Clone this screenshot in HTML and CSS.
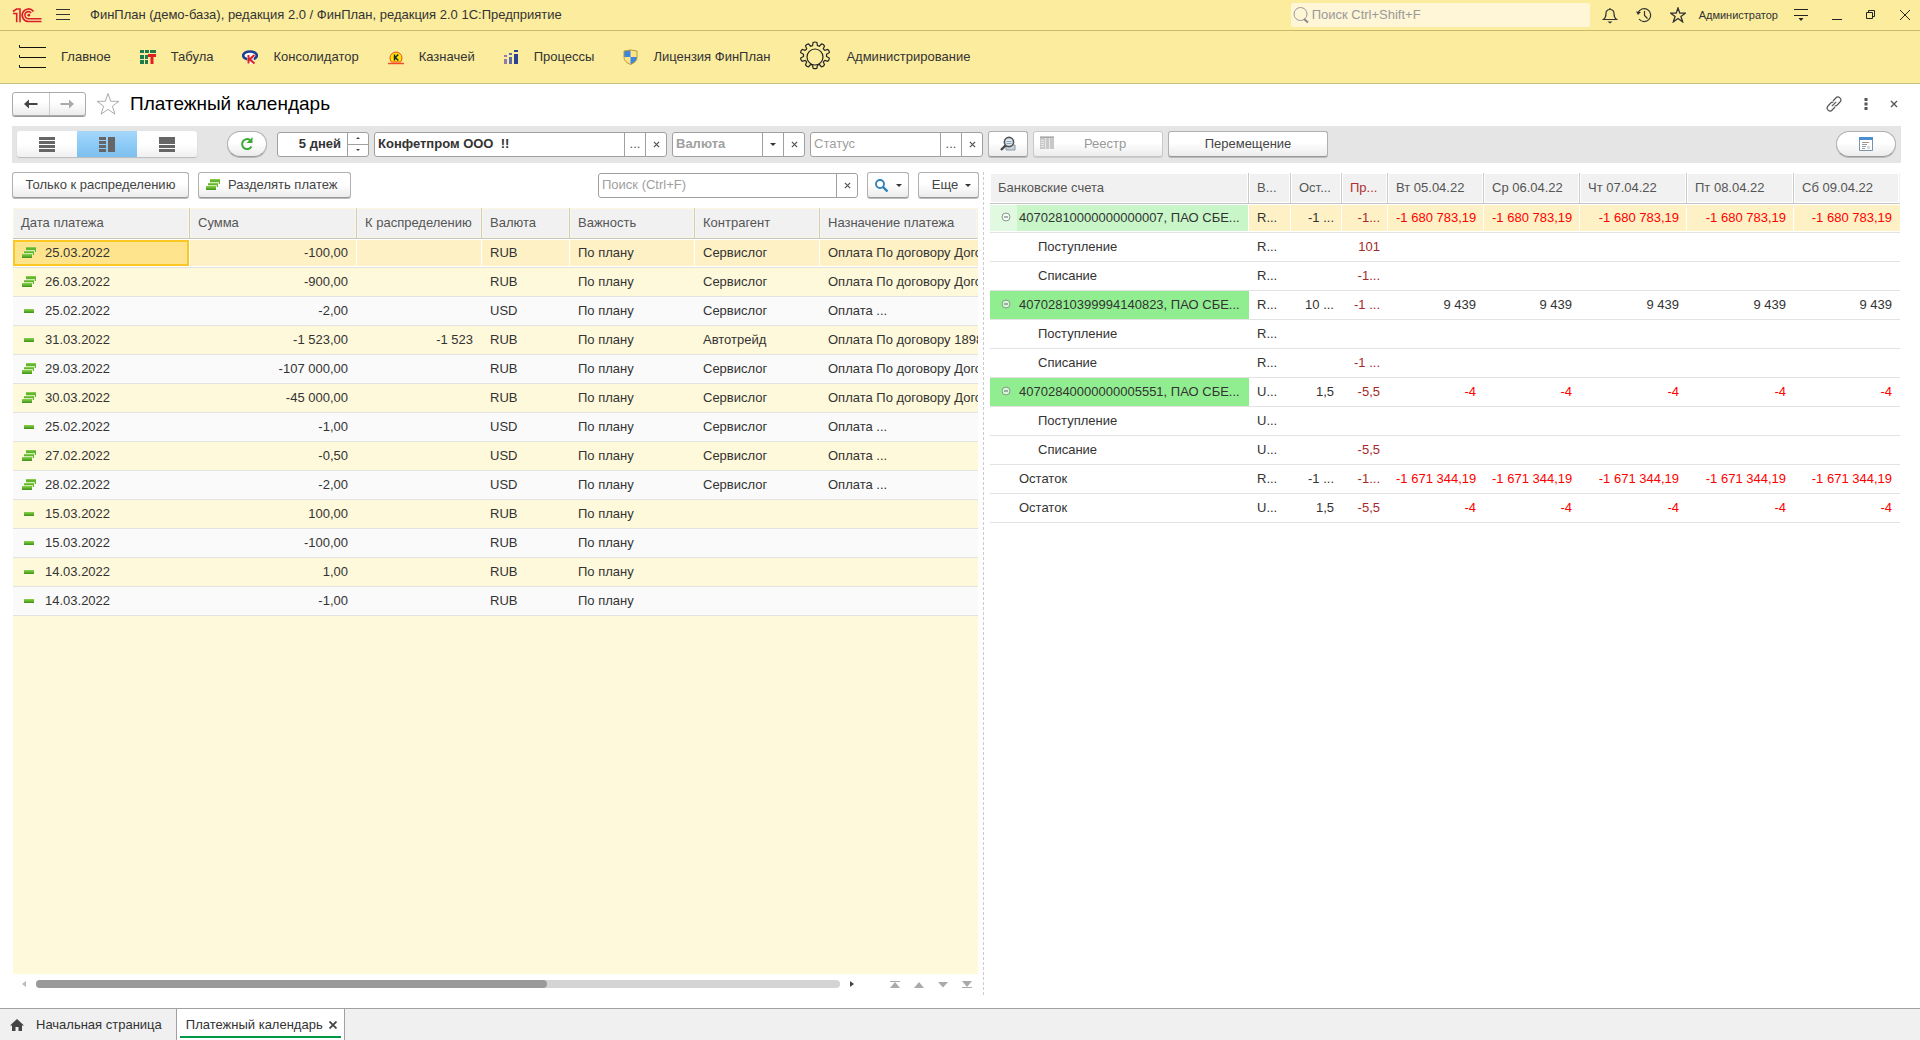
FILE: index.html
```html
<!DOCTYPE html>
<html lang="ru">
<head>
<meta charset="utf-8">
<title>Платежный календарь</title>
<link rel="stylesheet" href="styles.css">
</head>
<body>
<svg class="defs" aria-hidden="true">
  <defs>
    <linearGradient id="green" x1="0" y1="0" x2="0" y2="1"><stop offset="0" stop-color="#8fd04f"/><stop offset=".5" stop-color="#62b52e"/><stop offset="1" stop-color="#3f8f1c"/></linearGradient>
  </defs>
  <symbol id="many" viewBox="0 0 15 12"><path d="M4 0h10v5h-2v3h-2v3H0V7h2V4h2z" fill="#cfeab5"/><path d="M4 0h10v5h-1V3H4zM2 4h10v4h-1V6H2z" fill="#62b52e"/><path d="M4 0h10v1H4zM2 4h10v1H2z" fill="#86ca4a"/><path d="M0 7h10v4H0z" fill="url(#green)"/></symbol>
  <symbol id="one" viewBox="0 0 15 12"><path d="M2 4h10v4H2z" fill="url(#green)"/></symbol>
  <symbol id="minus" viewBox="0 0 10 10"><circle cx="5" cy="5" r="4" fill="#fff" fill-opacity=".6" stroke="#8a9a8a"/><path d="M3 5h4" stroke="#667" /></symbol>
  <symbol id="cross" viewBox="0 0 8 8"><path d="M1 1l6 6M7 1L1 7" fill="none" stroke="currentColor" stroke-width="1.4"/></symbol>
  <symbol id="star" viewBox="0 0 24 24"><path d="M12 1.500l2.700 7.800h8.300l-6.600 4.900 2.500 8-6.900-4.900-6.900 4.900 2.500-8L1 9.300h8.300z" fill="none" stroke="currentColor"/></symbol>
</svg>

<header class="titlebar">
  <svg class="logo" viewBox="0 0 30 16"><g fill="none" stroke="#d9202a" stroke-width="1.600"><path d="M1 4.500L4.500 2H8v13.200M1 6.500h3.700v8.700"/><path d="M21.500 4.400A6.300 6.300 0 1 0 16.500 14.500H29.500"/><path d="M19.200 5.900A3.600 3.600 0 1 0 16.500 11.800H29.500"/></g><circle cx="16.800" cy="8.200" r="1.400" fill="#d9202a"/></svg>
  <button class="plain menu-btn" aria-label="Меню"><svg width="14" height="12" viewBox="0 0 14 12"><path d="M0 .500h14M0 5.500h14M0 10.500h14" stroke="#333"/></svg></button>
  <span class="app-name">ФинПлан (демо-база), редакция 2.0 / ФинПлан, редакция 2.0 1С:Предприятие</span>
  <label class="global-search">
    <svg width="16" height="18" viewBox="0 0 16 18"><circle cx="7.500" cy="8" r="6.500" fill="none" stroke="#999"/><path d="M11 13l4 3.500" stroke="#888" stroke-width="2"/></svg>
    <input type="text" placeholder="Поиск Ctrl+Shift+F" aria-label="Поиск">
  </label>
  <div class="tools">
    <button class="plain" aria-label="Уведомления"><svg width="16" height="18" viewBox="0 0 16 18"><path d="M1.500 13.500h13c-2-1.500-2.500-3-2.500-6C12 5 10.500 3.500 8 3.500S4 5 4 7.500c0 3-.5 4.500-2.500 6zM8 3.500V2" fill="none" stroke="#333" stroke-width="1.200"/><path d="M5.500 15.500h5L8 17.500z" fill="#333"/></svg></button>
    <button class="plain" aria-label="История"><svg width="16" height="18" viewBox="0 0 16 18"><path d="M2 7A6.500 6.500 0 1 1 3 13M8.500 5v4.500l3 3" fill="none" stroke="#333" stroke-width="1.200"/><path d="M0 5.500l5 .5-3 3z" fill="#333"/></svg></button>
    <button class="plain" aria-label="Избранное"><svg class="dark" width="16" height="16"><use href="#star" stroke-width="2"/></svg></button>
  </div>
  <a class="user" href="#">Администратор</a>
  <div class="window-tools">
    <button class="plain" aria-label="Настройки"><svg width="14" height="12" viewBox="0 0 14 12"><path d="M0 .500h14M0 6.500h14" stroke="#222"/><path d="M4.500 9h5L7 12z" fill="#222"/></svg></button>
    <button class="plain" aria-label="Свернуть"><svg width="10" height="10" viewBox="0 0 10 10"><path d="M0 9.500h10" stroke="#222"/></svg></button>
    <button class="plain" aria-label="Восстановить"><svg width="10" height="10" viewBox="0 0 10 10"><path d="M.5 2.500h6v6h-6zM2.500 2.500v-2h6v6h-2" fill="none" stroke="#222"/></svg></button>
    <button class="plain" aria-label="Закрыть"><svg width="10" height="10" viewBox="0 0 10 10"><path d="M0 0l10 10M10 0L0 10" stroke="#222"/></svg></button>
  </div>
</header>

<nav class="sections">
  <a href="#"><svg width="28" height="24" viewBox="0 0 28 24"><path d="M1.500 0v2.500H28M1.500 10v2.500H28M1.500 20v2.500H28" fill="none" stroke="#111" stroke-width="1"/></svg><span>Главное</span></a>
  <a href="#"><svg width="16" height="16" viewBox="0 0 16 16"><path d="M0 1h4v3H0zM5 1h4v3H5zM0 6h4v4H0zM0 11h4v4H0zM5 6h3v4H5zM5 11h3v4H5zM10 1h6v3h-6z" fill="#1f7a4d"/><path d="M8 5h8v3h-2.500v7h-3V8H8z" fill="#e02020"/></svg><span>Табула</span></a>
  <a href="#"><svg width="16" height="16" viewBox="0 0 16 16"><ellipse cx="8" cy="6.500" rx="6.800" ry="4" fill="#fff" stroke="#1c3f94" stroke-width="2.600"/><path d="M5 6h7v9H5z" fill="#fff" fill-opacity=".7"/><path d="M6.500 6v8.500M12.500 6L7.500 10.300l5 4.200" fill="none" stroke="#e02020" stroke-width="2"/></svg><span>Консолидатор</span></a>
  <a href="#"><svg width="16" height="16" viewBox="0 0 16 16"><path d="M3.500 13a6 6 0 1 1 9 0z" fill="#ffe800" stroke="#f04a23"/><path d="M0 14.500h16" stroke="#f04a23" stroke-width="1.400"/><path d="M6.500 5.500v6M10.300 5.500L7.300 8.500l3 3" fill="none" stroke="#222" stroke-width="1.500"/></svg><span>Казначей</span></a>
  <a href="#"><svg width="15" height="16" viewBox="0 0 15 16"><path d="M0 10h3v5H0zM0 6h3v2H0z" fill="#8e7bb0"/><path d="M5 8h3v7H5zM5 4h3v2H5z" fill="#5c6aa8"/><path d="M10 5h4v10h-4zM10 1h4v2h-4z" fill="#2b3f94"/></svg><span>Процессы</span></a>
  <a href="#"><svg width="15" height="16" viewBox="0 0 15 16"><path d="M7.500 1l6.500 1v6c0 4-3 6-6.500 7.500C4 14 1 12 1 8V2z" fill="#ffe38a"/><path d="M7.500 1v7H1V2zM7.500 8H14c0 4-3 6-6.500 7.500z" fill="#3d85dd"/><path d="M7.500 1l6.500 1v6c0 4-3 6-6.500 7.500C4 14 1 12 1 8V2z" fill="none" stroke="#b99a35"/></svg><span>Лицензия ФинПлан</span></a>
  <a href="#"><svg width="32" height="32" viewBox="-16 -16 32 32"><g fill="none" stroke="#222" stroke-width="1.200"><circle r="8"/><path d="M-1.900-14.500q1.900-1 3.800 0l.5 3.100 2 .6 2.100-2.400q2.100.2 3 2.100l-1.200 2.900 1.500 1.500 3-.9q1.700 1.300 1.500 3.300l-2.800 1.600v2.100l2.800 1.600q.1 2-1.500 3.300l-3-.9-1.500 1.500 1.200 2.900q-1 1.900-3 2.100l-2.100-2.400-2 .6-.5 3.100q-1.900 1-3.800 0l-.5-3.100-2-.6-2.100 2.400q-2.100-.2-3-2.100l1.200-2.900-1.500-1.500-3 .9q-1.700-1.300-1.500-3.300l2.800-1.600v-2.100l-2.800-1.600q-.1-2 1.500-3.300l3 .9 1.500-1.500-1.200-2.900q1-1.900 3-2.100l2.100 2.400 2-.6z"/></g></svg><span>Администрирование</span></a>
</nav>

<main class="form">
  <div class="form-head">
    <div class="history">
      <button aria-label="Назад"><svg width="14" height="10" viewBox="0 0 14 10"><path d="M13.500 5H3" stroke="#444" stroke-width="2"/><path d="M0 5l5-4.500v9z" fill="#444"/></svg></button>
      <button aria-label="Вперед"><svg width="14" height="10" viewBox="0 0 14 10"><path d="M.5 5h10" stroke="#aaa" stroke-width="2"/><path d="M14 5L9 .500v9z" fill="#aaa"/></svg></button>
    </div>
    <button class="plain fav" aria-label="В избранное"><svg width="24" height="24"><use href="#star"/></svg></button>
    <h1>Платежный календарь</h1>
    <div class="form-tools">
      <button class="plain" aria-label="Ссылка"><svg width="16" height="16" viewBox="0 0 16 16"><g fill="none" stroke="#555" stroke-width="1.200"><path d="M7 5l2.800-3A2.900 2.900 0 0 1 14 6L11 9.200q-1 .8-2.300.5M9 11L6.200 14A2.900 2.900 0 0 1 2 10L5 6.800q1-.8 2.300-.5M5.800 10.200l4.400-4.400"/></g></svg></button>
      <button class="plain" aria-label="Еще действия"><svg width="4" height="12" viewBox="0 0 4 12"><path d="M.5 0h3v3h-3zM.5 4.500h3v3h-3zM.5 9h3v3h-3z" fill="#555"/></svg></button>
      <button class="plain" aria-label="Закрыть форму"><svg width="8" height="8"><use href="#cross"/></svg></button>
    </div>
  </div>

  <div class="toolbar">
    <div class="modes">
      <button aria-label="Список"><svg width="16" height="15" viewBox="0 0 16 15"><path d="M0 0h16v3H0zM0 4h16v3H0zM0 8h16v3H0zM0 12h16v3H0z" fill="#666"/></svg></button>
      <button class="on" aria-label="Список и календарь"><svg width="16" height="15" viewBox="0 0 16 15"><path d="M0 0h7v3H0zM0 4h7v3H0zM0 8h7v3H0zM0 12h7v3H0zM9 0h7v15H9z" fill="#666"/></svg></button>
      <button aria-label="Календарь"><svg width="16" height="15" viewBox="0 0 16 15"><path d="M0 0h16v7H0zM0 8h16v3H0zM0 12h16v3H0z" fill="#666"/></svg></button>
    </div>
    <button class="btn pill refresh" aria-label="Обновить"><svg width="14" height="14" viewBox="0 0 14 14"><path d="M11.500 9.500A5 5 0 1 1 10 3" fill="none" stroke="#3aaa35" stroke-width="2"/><path d="M12.500 0v6h-6z" fill="#3aaa35"/></svg></button>
    <div class="field days">
      <input class="strong" type="text" value="5 дней" aria-label="Период">
      <div class="spin"><button aria-label="Больше"><i class="up"></i></button><button aria-label="Меньше"><i class="down"></i></button></div>
    </div>
    <div class="field org">
      <input class="strong" type="text" value="Конфетпром ООО  !!" aria-label="Организация">
      <button>...</button><button aria-label="Очистить организацию"><svg width="7" height="7"><use href="#cross"/></svg></button>
    </div>
    <div class="field currency">
      <input class="strong" type="text" placeholder="Валюта" aria-label="Валюта">
      <button aria-label="Выбрать валюту"><i class="caret"></i></button><button aria-label="Очистить валюту"><svg width="7" height="7"><use href="#cross"/></svg></button>
    </div>
    <div class="field status">
      <input type="text" placeholder="Статус" aria-label="Статус">
      <button>...</button><button aria-label="Очистить статус"><svg width="7" height="7"><use href="#cross"/></svg></button>
    </div>
    <button class="btn find" aria-label="Найти документ"><svg width="16" height="16" viewBox="0 0 16 16"><path d="M6 9h9v5H6z" fill="#c9d3dc" stroke="#8a949c"/><circle cx="9" cy="6" r="4.600" fill="#dfe9f2" stroke="#555" stroke-width="1.600"/><path d="M6.500 5.500h5M6.500 7.500h5" stroke="#8fa3b5"/><path d="M5.500 9.500L1 14" stroke="#444" stroke-width="2.400"/></svg></button>
    <button class="btn registry" disabled><svg width="14" height="13" viewBox="0 0 14 13"><path d="M0 0h14v13H0z" fill="#c8c8c8"/><path d="M0 1.500h14" stroke="#aaa"/><path d="M1 4.500h3M1 6.500h3M1 8.500h3M1 10.500h3M5.500 2v11M9.500 2v11" stroke="#e8e8e8"/></svg><span>Реестр</span></button>
    <button class="btn transfer">Перемещение</button>
    <button class="btn pill settings" aria-label="Настройка формы"><svg width="14" height="14" viewBox="0 0 14 14"><path d="M.5.500h13v13H.5z" fill="#fff" stroke="#7b93a8"/><path d="M0 0h14v3H0z" fill="#4a90d0"/><path d="M3 5.500h7M3 7.500h5M3 9.500h4M3 11.500h3" stroke="#999"/><path d="M8 9h3v3H8z" fill="#d5dbe0"/></svg></button>
  </div>

  <div class="panes">
    <section class="payments">
      <div class="commands">
        <button class="btn only">Только к распределению</button>
        <button class="btn split"><svg width="15" height="12"><use href="#many"/></svg>Разделять платеж</button>
        <div class="field search">
          <input type="text" placeholder="Поиск (Ctrl+F)" aria-label="Поиск в списке">
          <button aria-label="Очистить поиск"><svg width="7" height="7"><use href="#cross"/></svg></button>
        </div>
        <button class="btn lens" aria-label="Найти"><svg width="13" height="13" viewBox="0 0 13 13"><circle cx="5" cy="5" r="4" fill="none" stroke="#2f7fb8" stroke-width="1.800"/><path d="M8 8l4.500 4.500" stroke="#2f7fb8" stroke-width="2.400"/></svg><i class="caret"></i></button>
        <button class="btn more">Еще<i class="caret"></i></button>
      </div>
      <div class="list">
        <table class="grid">
          <colgroup><col class="c-date"><col class="c-sum"><col class="c-mid"><col class="c-cur"><col class="c-mid"><col class="c-mid"><col></colgroup>
          <thead><tr><th>Дата платежа</th><th>Сумма</th><th>К распределению</th><th>Валюта</th><th>Важность</th><th>Контрагент</th><th>Назначение платежа</th></tr></thead>
          <tbody>
            <tr class="selected"><td class="current"><svg class="mark"><use href="#many"/></svg>25.03.2022</td><td class="num">-100,00</td><td></td><td>RUB</td><td>По плану</td><td>Сервислог</td><td>Оплата По договору Договор</td></tr>
            <tr><td><svg class="mark"><use href="#many"/></svg>26.03.2022</td><td class="num">-900,00</td><td></td><td>RUB</td><td>По плану</td><td>Сервислог</td><td>Оплата По договору Договор</td></tr>
            <tr><td><svg class="mark"><use href="#one"/></svg>25.02.2022</td><td class="num">-2,00</td><td></td><td>USD</td><td>По плану</td><td>Сервислог</td><td>Оплата ...</td></tr>
            <tr><td><svg class="mark"><use href="#one"/></svg>31.03.2022</td><td class="num">-1 523,00</td><td class="num">-1 523</td><td>RUB</td><td>По плану</td><td>Автотрейд</td><td>Оплата По договору 1898</td></tr>
            <tr><td><svg class="mark"><use href="#many"/></svg>29.03.2022</td><td class="num">-107 000,00</td><td></td><td>RUB</td><td>По плану</td><td>Сервислог</td><td>Оплата По договору Договор</td></tr>
            <tr><td><svg class="mark"><use href="#many"/></svg>30.03.2022</td><td class="num">-45 000,00</td><td></td><td>RUB</td><td>По плану</td><td>Сервислог</td><td>Оплата По договору Договор</td></tr>
            <tr><td><svg class="mark"><use href="#one"/></svg>25.02.2022</td><td class="num">-1,00</td><td></td><td>USD</td><td>По плану</td><td>Сервислог</td><td>Оплата ...</td></tr>
            <tr><td><svg class="mark"><use href="#many"/></svg>27.02.2022</td><td class="num">-0,50</td><td></td><td>USD</td><td>По плану</td><td>Сервислог</td><td>Оплата ...</td></tr>
            <tr><td><svg class="mark"><use href="#many"/></svg>28.02.2022</td><td class="num">-2,00</td><td></td><td>USD</td><td>По плану</td><td>Сервислог</td><td>Оплата ...</td></tr>
            <tr><td><svg class="mark"><use href="#one"/></svg>15.03.2022</td><td class="num">100,00</td><td></td><td>RUB</td><td>По плану</td><td></td><td></td></tr>
            <tr><td><svg class="mark"><use href="#one"/></svg>15.03.2022</td><td class="num">-100,00</td><td></td><td>RUB</td><td>По плану</td><td></td><td></td></tr>
            <tr><td><svg class="mark"><use href="#one"/></svg>14.03.2022</td><td class="num">1,00</td><td></td><td>RUB</td><td>По плану</td><td></td><td></td></tr>
            <tr><td><svg class="mark"><use href="#one"/></svg>14.03.2022</td><td class="num">-1,00</td><td></td><td>RUB</td><td>По плану</td><td></td><td></td></tr>
          </tbody>
        </table>
      </div>
      <div class="scroller">
        <button class="plain" aria-label="Влево"><svg width="4" height="6" viewBox="0 0 4 6"><path d="M4 0v6L0 3z" fill="#bbb"/></svg></button>
        <div class="track"><div class="thumb"></div></div>
        <button class="plain" aria-label="Вправо"><svg width="4" height="6" viewBox="0 0 4 6"><path d="M0 0v6l4-3z" fill="#444"/></svg></button>
        <div class="jumps">
          <button class="plain" aria-label="В начало"><svg width="10" height="7" viewBox="0 0 10 7"><path d="M0 .500h10" stroke="#aaa"/><path d="M0 7h10L5 1z" fill="#aaa"/></svg></button>
          <button class="plain" aria-label="Вверх"><svg width="10" height="7" viewBox="0 0 10 7"><path d="M0 7h10L5 1z" fill="#aaa"/></svg></button>
          <button class="plain" aria-label="Вниз"><svg width="10" height="7" viewBox="0 0 10 7"><path d="M0 1h10L5 6.500z" fill="#aaa"/></svg></button>
          <button class="plain" aria-label="В конец"><svg width="10" height="7" viewBox="0 0 10 7"><path d="M0 6.500h10" stroke="#aaa"/><path d="M0 0h10L5 6z" fill="#aaa"/></svg></button>
        </div>
      </div>
    </section>

    <div class="splitter"></div>

    <section class="calendar">
      <table class="grid tree">
        <colgroup><col class="c-acc"><col class="c-val"><col class="c-rest"><col class="c-over"><col class="c-day"><col class="c-day"><col class="c-wide"><col class="c-wide"><col></colgroup>
        <thead><tr><th>Банковские счета</th><th>В...</th><th>Ост...</th><th class="dark-red">Пр...</th><th>Вт 05.04.22</th><th>Ср 06.04.22</th><th>Чт 07.04.22</th><th>Пт 08.04.22</th><th>Сб 09.04.22</th></tr></thead>
        <tbody>
          <tr class="selected"><td class="account first"><svg class="fold"><use href="#minus"/></svg>40702810000000000007, ПАО СБЕ...</td><td>R...</td><td class="num">-1 ...</td><td class="num dark-red">-1...</td><td class="num red">-1 680 783,19</td><td class="num red">-1 680 783,19</td><td class="num red">-1 680 783,19</td><td class="num red">-1 680 783,19</td><td class="num red">-1 680 783,19</td></tr>
          <tr><td class="child">Поступление</td><td>R...</td><td></td><td class="num dark-red">101</td><td></td><td></td><td></td><td></td><td></td></tr>
          <tr><td class="child">Списание</td><td>R...</td><td></td><td class="num dark-red">-1...</td><td></td><td></td><td></td><td></td><td></td></tr>
          <tr><td class="account"><svg class="fold"><use href="#minus"/></svg>40702810399994140823, ПАО СБЕ...</td><td>R...</td><td class="num">10 ...</td><td class="num dark-red">-1 ...</td><td class="num">9 439</td><td class="num">9 439</td><td class="num">9 439</td><td class="num">9 439</td><td class="num">9 439</td></tr>
          <tr><td class="child">Поступление</td><td>R...</td><td></td><td></td><td></td><td></td><td></td><td></td><td></td></tr>
          <tr><td class="child">Списание</td><td>R...</td><td></td><td class="num dark-red">-1 ...</td><td></td><td></td><td></td><td></td><td></td></tr>
          <tr><td class="account"><svg class="fold"><use href="#minus"/></svg>40702840000000005551, ПАО СБЕ...</td><td>U...</td><td class="num">1,5</td><td class="num dark-red">-5,5</td><td class="num red">-4</td><td class="num red">-4</td><td class="num red">-4</td><td class="num red">-4</td><td class="num red">-4</td></tr>
          <tr><td class="child">Поступление</td><td>U...</td><td></td><td></td><td></td><td></td><td></td><td></td><td></td></tr>
          <tr><td class="child">Списание</td><td>U...</td><td></td><td class="num dark-red">-5,5</td><td></td><td></td><td></td><td></td><td></td></tr>
          <tr><td class="total">Остаток</td><td>R...</td><td class="num">-1 ...</td><td class="num dark-red">-1...</td><td class="num red">-1 671 344,19</td><td class="num red">-1 671 344,19</td><td class="num red">-1 671 344,19</td><td class="num red">-1 671 344,19</td><td class="num red">-1 671 344,19</td></tr>
          <tr><td class="total">Остаток</td><td>U...</td><td class="num">1,5</td><td class="num dark-red">-5,5</td><td class="num red">-4</td><td class="num red">-4</td><td class="num red">-4</td><td class="num red">-4</td><td class="num red">-4</td></tr>
        </tbody>
      </table>
    </section>
  </div>
</main>

<footer class="tabs">
  <a class="tab home" href="#"><svg width="14" height="12" viewBox="0 0 14 12"><path d="M7 0l7 6.500h-2V12H8.500V8h-3v4H2V6.500H0z" fill="#444"/></svg>Начальная страница</a>
  <div class="tab active"><a href="#">Платежный календарь</a><button class="plain" aria-label="Закрыть вкладку"><svg width="8" height="8" viewBox="0 0 8 8"><path d="M.5.500l7 7M7.500.500l-7 7" stroke="#444" stroke-width="1.800"/></svg></button></div>
</footer>
</body>
</html>
```
FILE: styles.css
```css
* { box-sizing: border-box; }

body {
  margin: 0;
  min-height: 100vh;
  display: flex;
  flex-direction: column;
  background: #fff;
  color: #333;
  font: 13px/16px "Liberation Sans", Arial, sans-serif;
}

button, input { font: inherit; color: inherit; margin: 0; }
a { color: inherit; text-decoration: none; }
svg { display: block; flex: none; }
.defs { position: absolute; width: 0; height: 0; }

.plain {
  display: flex;
  align-items: center;
  justify-content: center;
  padding: 0;
  border: 0;
  background: none;
}

/* title bar */
.titlebar {
  display: flex;
  align-items: center;
  height: 31px;
  padding: 0 10px 0 12px;
  background: #fbec9e;
  border-bottom: 1px solid #c8b96c;
}
.logo { width: 30px; height: 16px; }
.menu-btn { margin-left: 14px; }
.app-name { margin: 0 auto 0 20px; white-space: nowrap; }
.global-search {
  display: flex;
  align-items: center;
  gap: 3px;
  width: 299px;
  height: 24px;
  padding-left: 2px;
  background: #fef6d6;
  border-radius: 2px;
}
.global-search input { flex: 1; min-width: 0; padding: 0; border: 0; background: none; outline: 0; }
.tools { display: flex; gap: 18px; margin-left: 12px; }
.dark { color: #333; }
.user { margin-left: 13px; font-size: 11px; }
.window-tools { display: flex; align-items: center; gap: 24px; margin-left: 16px; }

/* sections */
.sections {
  display: flex;
  align-items: center;
  gap: 29px;
  height: 53px;
  padding-left: 18px;
  background: #fbec9e;
  border-bottom: 1px solid #c8be7c;
}
.sections a { display: flex; align-items: center; gap: 15px; white-space: nowrap; }

/* form header */
.form { flex: 1; display: flex; flex-direction: column; padding: 0 19px 0 12px; }
.form-head { display: flex; align-items: center; height: 42px; padding-bottom: 2px; }
.history {
  display: flex;
  width: 74px;
  height: 24px;
  border: 1px solid #aaa;
  border-radius: 3px;
  background: linear-gradient(#fff 40%, #ececec);
  box-shadow: 0 1px 0 #999;
}
.history button {
  flex: 1;
  display: flex;
  align-items: center;
  justify-content: center;
  padding: 0;
  border: 0;
  background: none;
}
.history button + button { border-left: 1px solid #ccc; }
.fav { margin-left: 10px; color: #aaa; }
h1 { margin: 0 auto 0 10px; font-size: 19px; line-height: 22px; font-weight: 400; color: #000; }
.form-tools { display: flex; align-items: center; gap: 22px; margin-right: 3px; color: #555; }

/* shared controls */
.btn {
  display: flex;
  align-items: center;
  justify-content: center;
  height: 26px;
  padding: 0;
  border: 1px solid #b0b0b0;
  border-bottom-color: #999;
  border-radius: 3px;
  background: linear-gradient(#fff 45%, #ececec);
  box-shadow: 0 1px 0 #bbb;
  color: #444;
  white-space: nowrap;
}
.btn:disabled { color: #999; border-color: #c8c8c8; box-shadow: 0 1px 0 #ccc; }
.pill { border-radius: 13px; }

.field {
  display: flex;
  height: 25px;
  border: 1px solid #a0a0a0;
  border-radius: 3px;
  background: #fff;
  overflow: hidden;
}
.field input {
  flex: 1;
  min-width: 0;
  padding: 0 6px 0 3px;
  border: 0;
  outline: 0;
  background: none;
  white-space: pre;
}
.field input::placeholder { color: #a0a0a0; }
.global-search input::placeholder { color: #999; }
.field .strong { font-weight: 700; }
.field > button {
  display: flex;
  align-items: center;
  justify-content: center;
  width: 21px;
  padding: 0;
  border: 0;
  border-left: 1px solid #a0a0a0;
  background: none;
  color: #555;
}
.caret { border: 3px solid transparent; border-top-color: #333; border-bottom: 0; }

/* toolbar */
.toolbar {
  display: flex;
  align-items: center;
  gap: 5px;
  height: 37px;
  padding: 0 5px 1px;
  background: #e5e5e5;
}
.modes { display: flex; width: 180px; height: 26px; border-radius: 3px; box-shadow: 0 1px 1px #bbb; overflow: hidden; }
.modes button {
  flex: 1;
  display: flex;
  align-items: center;
  justify-content: center;
  padding: 0;
  border: 0;
  background: linear-gradient(#fff 50%, #f0f0f0);
}
.modes .on { background: linear-gradient(#a6d7fa, #8ecbf7 50%, #7dbfee); }
.refresh { width: 40px; margin: 0 5px 0 25px; }
.days { width: 92px; }
.days input { text-align: right; }
.spin { display: flex; flex-direction: column; width: 21px; border-left: 1px solid #a0a0a0; }
.spin button { flex: 1; display: flex; align-items: center; justify-content: center; padding: 0; border: 0; background: none; }
.spin button + button { border-top: 1px solid #a0a0a0; }
.spin i { border: 2px solid transparent; }
.spin .up { border-bottom-color: #444; border-top: 0; }
.spin .down { border-top-color: #444; border-bottom: 0; }
.org { width: 293px; }
.currency { width: 133px; }
.status { width: 173px; }
.find { width: 40px; }
.registry { width: 130px; padding: 0 6px; }
.registry svg { align-self: flex-start; margin-top: 4px; }
.registry span { flex: 1; }
.transfer { width: 160px; }
.settings { width: 60px; margin-left: auto; }

/* panes */
.panes { flex: 1; display: grid; grid-template-columns: 967fr 11px 911fr; padding-bottom: 13px; }
.payments { display: flex; flex-direction: column; min-width: 0; margin-bottom: -13px; }
.commands { display: flex; align-items: center; height: 45px; padding-bottom: 1px; }
.only { width: 177px; }
.split { width: 153px; margin-left: 9px; padding-left: 7px; gap: 7px; justify-content: flex-start; }
.search { width: 260px; margin-left: auto; }
.lens { width: 42px; margin-left: 9px; gap: 8px; }
.more { width: 61px; margin-left: 9px; gap: 7px; padding-left: 6px; }
.splitter { margin: 9px 0 0 4px; border-left: 1px dashed #ccc; }
.calendar { min-width: 0; padding: 10px 1px 0 0; }
.list { flex: 1; margin: 0 1px; background: #fff9db; overflow: hidden; }

/* tables */
.grid { width: 100%; table-layout: fixed; border-collapse: separate; border-spacing: 0; }
.grid th, .grid td { padding: 0 8px; overflow: hidden; white-space: nowrap; text-align: left; }
.grid th {
  height: 31px;
  font-weight: 400;
  color: #555;
  background: #f1f1f1;
  border-right: 1px solid #ccc;
  border-bottom: 1px solid #c4c4c4;
  box-shadow: inset 0 0 0 1px #fcf8e0;
}
.grid th:last-child { border-right-color: transparent; }
.grid td { height: 29px; border-bottom: 1px solid #e3e3e3; }
.payments tbody tr:nth-child(odd) { background: #fafafa; }
.payments tbody tr:nth-child(even) { background: #fff9db; }
.grid td.num { text-align: right; padding-right: 9px; }
.tree td.num { padding-right: 8px; }
.grid .selected td { background: #fef1c6; box-shadow: inset 0 1px #fff, inset 0 -1px #fff, inset -1px 0 #fff; }
.grid .selected td:last-child { box-shadow: inset 0 1px #fff, inset 0 -1px #fff; }
.grid .selected .current {
  background: #ffe48e;
  box-shadow: inset 0 1px #fff, inset 0 -1px #fff, inset -1px 0 #fff, inset 2px 0 #fcc722, inset 0 3px #fcc722, inset 0 -3px #fcc722, inset -3px 0 #fcc722;
}
.mark { display: inline-block; width: 15px; height: 12px; margin: 0 8px 0 1px; vertical-align: -2px; }
.c-date { width: 177px; }
.c-sum { width: 167px; }
.c-mid { width: 125px; }
.c-cur { width: 88px; }

.tree th { box-shadow: inset 0 0 0 1px #fff; }
.tree .account { background: #90ee90; padding-left: 11px; }
.tree .selected .first { background: linear-gradient(90deg, #e1f9e1 27px, #c8f6c8 27px); }
.tree .child { padding-left: 48px; }
.tree .total { padding-left: 29px; }
.fold { display: inline-block; width: 10px; height: 10px; margin-right: 8px; vertical-align: 0; }
.red { color: #f00; }
.grid .dark-red { color: #a52a2a; }
.grid th.dark-red { color: #b03030; }
.c-acc { width: 259px; }
.c-val { width: 42px; }
.c-rest { width: 51px; }
.c-over { width: 46px; }
.c-day { width: 96px; }
.c-wide { width: 107px; }

/* scroll row */
.scroller { display: flex; align-items: center; height: 34px; padding: 0 7px 14px 10px; }
.track { flex: 1; height: 8px; margin: 0 10px; background: #d4d4d4; border-radius: 4px; }
.thumb { width: 63.5%; height: 8px; background: #999; border-radius: 4px; }
.jumps { display: flex; gap: 14px; margin-left: 36px; }

/* open tabs */
.tabs { display: flex; height: 32px; background: #f0f0f0; border-top: 1px solid #a0a0a0; }
.tab { display: flex; align-items: center; white-space: nowrap; }
.home { gap: 12px; padding: 0 14px 0 10px; }
.active {
  gap: 6px;
  padding: 0 7px 0 9px;
  border: 1px solid #a0a0a0;
  border-width: 0 1px;
  background: linear-gradient(#009845, #009845) 3px 27px / calc(100% - 6px) 2px no-repeat #fff;
}
```
